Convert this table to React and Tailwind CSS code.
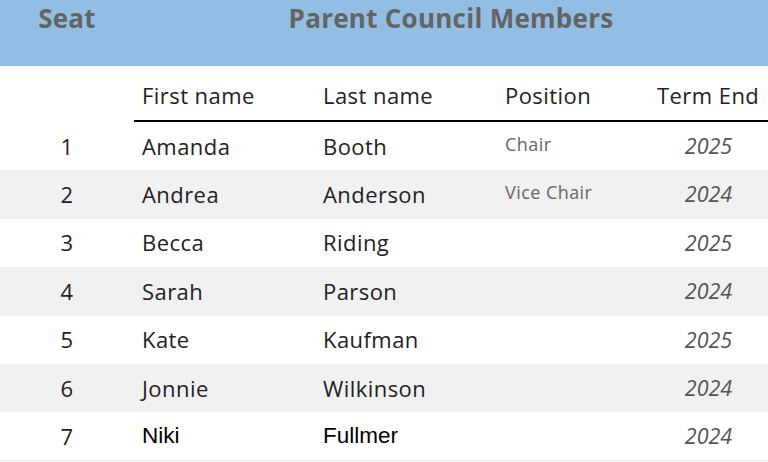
const members = [
  { seat: 1, first: "Amanda", last: "Booth", position: "Chair", term: "2025" },
  { seat: 2, first: "Andrea", last: "Anderson", position: "Vice Chair", term: "2024" },
  { seat: 3, first: "Becca", last: "Riding", position: "", term: "2025" },
  { seat: 4, first: "Sarah", last: "Parson", position: "", term: "2024" },
  { seat: 5, first: "Kate", last: "Kaufman", position: "", term: "2025" },
  { seat: 6, first: "Jonnie", last: "Wilkinson", position: "", term: "2024" },
  { seat: 7, first: "Niki", last: "Fullmer", position: "", term: "2024", plain: true },
];

const cols = "grid grid-cols-[134px_181px_182px_152px_119px]";
const plain = "font-['Liberation_Sans',sans-serif] font-medium text-[22.5px] tracking-normal text-black";

export default function App() {
  return (
    <div className="w-[768px] h-[462px] overflow-hidden bg-white font-['Open_Sans',sans-serif] text-[#222]">
      <div className={`${cols} h-[66px] bg-[#93bee3] text-[#646464] font-bold text-[26px] tracking-[0.01em] leading-[36px]`}>
        <div className="text-center">Seat</div>
        <div className="col-span-4 text-center">Parent Council Members</div>
      </div>
      <div className={`${cols} h-[56px] items-center text-[22px] tracking-[0.02em]`}>
        <div />
        <div className="col-span-4 grid grid-cols-[181px_182px_152px_119px] h-full items-center pt-1 border-b-2 border-black">
          <div className="pl-2">First name</div>
          <div className="pl-2">Last name</div>
          <div className="pl-2">Position</div>
          <div className="pl-2">Term End</div>
        </div>
      </div>
      {members.map((m, i) => (
        <div
          key={m.seat}
          className={`${cols} h-[48.4px] items-center text-[22px] tracking-[0.02em] ${
            i % 2 === 1 ? "bg-[#f1f1f1]" : "bg-white"
          } ${i === members.length - 1 ? "border-b border-[#e6e6e6]" : ""}`}
        >
          <div className="text-center">{m.seat}</div>
          <div className={`pl-2 ${m.plain ? plain : ""}`}>{m.first}</div>
          <div className={`pl-2 ${m.plain ? plain : ""}`}>{m.last}</div>
          <div className="pl-2 text-[18px] text-[#666] -mt-1">{m.position}</div>
          <div className="text-center italic text-[21.5px] tracking-normal text-[#555]">{m.term}</div>
        </div>
      ))}
    </div>
  );
}
